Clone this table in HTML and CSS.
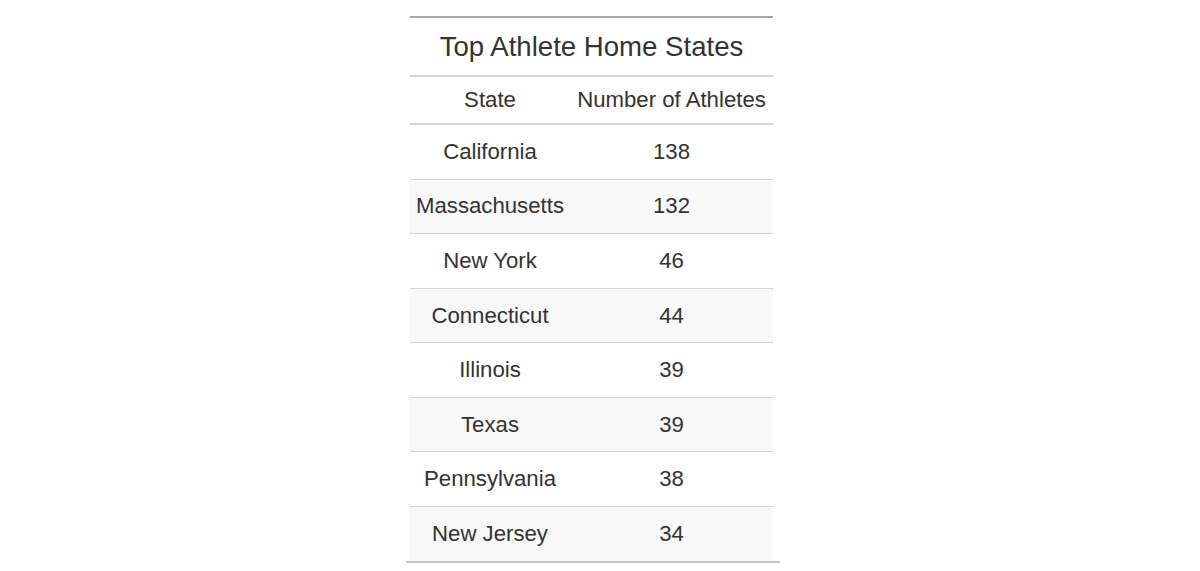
FILE: index.html
```html
<!DOCTYPE html>
<html>
<head>
<meta charset="utf-8">
<link rel="stylesheet" href="styles.css">
</head>
<body>
<div class="wrap">
<table class="gt">
  <colgroup><col class="c1"><col class="c2"></colgroup>
  <thead>
    <tr class="title-row"><th colspan="2" class="title">Top Athlete Home States</th></tr>
    <tr class="col-head"><th>State</th><th>Number of Athletes</th></tr>
  </thead>
  <tbody>
    <tr><td>California</td><td>138</td></tr>
    <tr class="alt"><td>Massachusetts</td><td>132</td></tr>
    <tr><td>New York</td><td>46</td></tr>
    <tr class="alt"><td>Connecticut</td><td>44</td></tr>
    <tr><td>Illinois</td><td>39</td></tr>
    <tr class="alt"><td>Texas</td><td>39</td></tr>
    <tr><td>Pennsylvania</td><td>38</td></tr>
    <tr class="alt"><td>New Jersey</td><td>34</td></tr>
  </tbody>
</table>
<div class="bottom-rule"></div>
</div>
</body>
</html>
```
FILE: styles.css
```css
html, body {
  margin: 0;
  padding: 0;
  background: #ffffff;
}
.wrap {
  display: flex;
  flex-direction: column;
  align-items: flex-start;
  padding-top: 16px;
  padding-left: 410px;
}
.gt {
  border-collapse: collapse;
  font-family: "Liberation Sans", Arial, sans-serif;
  color: #333333;
  font-size: 22.2px;
  width: 363px;
  table-layout: fixed;
  border-top: 2px solid #a8a8a8;
}
.gt th, .gt td {
  text-align: center;
  font-weight: normal;
  padding: 0;
  white-space: nowrap;
}
.title {
  font-size: 27.6px;
  height: 57px;
  border-bottom: 2px solid #d3d3d3;
}
.col-head th {
  height: 46px;
  border-bottom: 2px solid #d3d3d3;
}
.c1 { width: 160px; }
.c2 { width: 203px; }
.gt tbody td {
  height: 53.57px;
  border-top: 1px solid #d3d3d3;
}
.gt tbody tr:first-child td { border-top: none; height: 53.6px; }
.gt tbody tr.alt td { background: #f8f8f8; }
.bottom-rule {
  width: 374px;
  margin-left: -4px;
  height: 2px;
  background: #c4c4c4;
}
```
